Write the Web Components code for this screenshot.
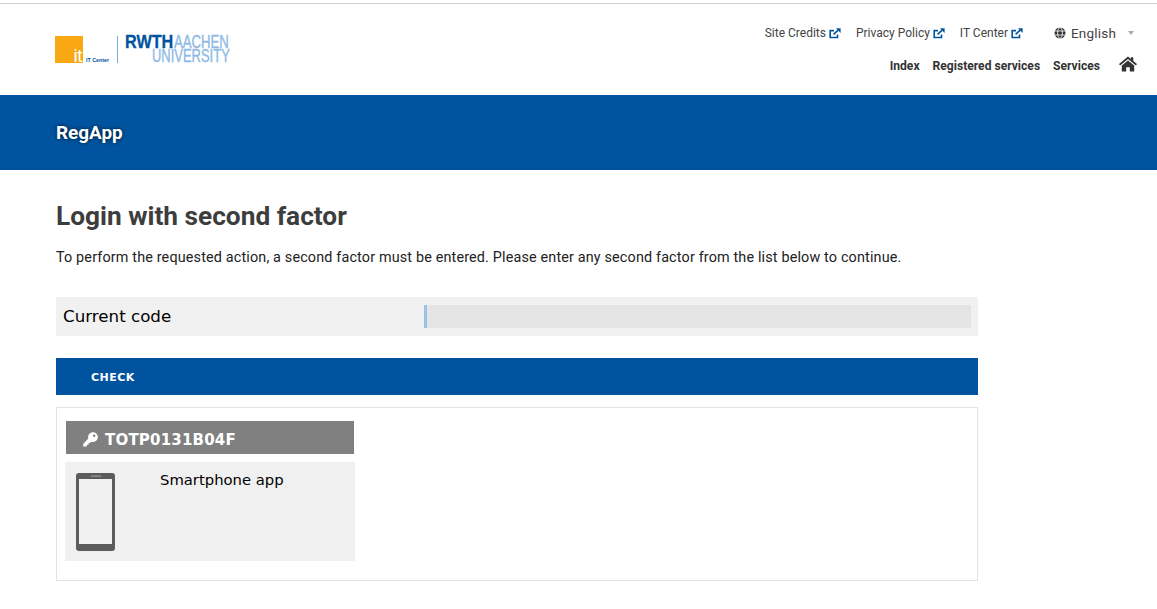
<!DOCTYPE html>
<html lang="en">
<head>
<meta charset="utf-8">
<title>RegApp</title>
<style>
  html, body { margin:0; padding:0; background:#fff; }
  body { font-family:Roboto, sans-serif; color:#333; }
</style>
</head>
<body>
<site-header></site-header>
<title-band>RegApp</title-band>
<main-content>
  <second-factor-form></second-factor-form>
</main-content>

<script>
class SiteLogo extends HTMLElement {
  constructor() {
    super();
    this.attachShadow({ mode: "open" });
    this.shadowRoot.innerHTML = `
      <style>
        :host { display:flex; align-items:flex-start; font-family:"Liberation Sans", sans-serif; }
        .it-box {
          width:28px; height:27px; margin-top:1px; background:#f9a814; color:#fff;
          display:flex; align-items:flex-end; justify-content:flex-end;
          font-size:19px; line-height:15px; padding-right:1px; box-sizing:border-box; letter-spacing:-.5px;
        }
        .it-label {
          width:25px; height:29px; margin-left:3px; display:flex; align-items:flex-end;
          font-size:5.3px; line-height:7px; font-weight:bold; color:#00549f; white-space:nowrap;
        }
        .sep { width:1px; height:27px; background:#7fa7cf; margin:1px 7px 0 6px; }
        .words { display:flex; flex-direction:column; width:105px; font-size:18px; }
        .line { display:flex; height:14px; line-height:14px; white-space:nowrap; }
        .line span { display:block; transform-origin:0 50%; }
        .rwth { width:49px; color:#00549f; font-weight:bold; transform:scaleX(.9); -webkit-text-stroke:.3px #00549f; }
        .aachen { width:55px; color:#8ebae5; transform:scaleX(.73); -webkit-text-stroke:.4px #8ebae5; }
        .univ { margin-left:27px; width:76px; color:#8ebae5; transform:scaleX(.72); -webkit-text-stroke:.4px #8ebae5; }
      </style>
      <div class="it-box">it</div>
      <div class="it-label">IT Center</div>
      <div class="sep"></div>
      <div class="words">
        <div class="line"><span class="rwth">RWTH</span><span class="aachen">AACHEN</span></div>
        <div class="line"><span class="univ">UNIVERSITY</span></div>
      </div>
    `;
  }
}

class UtilLink extends HTMLElement {
  constructor() {
    super();
    this.attachShadow({ mode: "open" });
    this.shadowRoot.innerHTML = `
      <style>
        :host { display:inline-flex; align-items:center; gap:3px; font-size:12px; color:#444; white-space:nowrap; }
        svg { width:12px; height:11px; display:block; }
      </style>
      <slot></slot>
      <svg viewBox="0 0 12 11" fill="none">
        <path d="M8.5 6.5V9.5H1.2V2.6H5" stroke="#00549f" stroke-width="1.6"/>
        <path d="M4.6 6.4L9.4 1.8" stroke="#00549f" stroke-width="1.6"/>
        <path d="M7 0.3H11.6V5Z" fill="#00549f"/>
      </svg>
    `;
  }
}

class SiteHeader extends HTMLElement {
  constructor() {
    super();
    this.attachShadow({ mode: "open" });
    this.shadowRoot.innerHTML = `
      <style>
        :host {
          display:block; height:95px; box-sizing:border-box; margin-top:3px;
          border-top:1px solid #cfcfcf; padding:31px 20px 0 55px;
        }
        .bar { display:flex; justify-content:space-between; align-items:flex-start; }
        .right { display:flex; flex-direction:column; align-items:flex-end; margin-top:-10px; }
        .util { display:flex; align-items:center; height:16px; }
        util-link { margin-right:15px; }
        util-link:nth-of-type(3) { margin-right:31px; }
        .lang { display:flex; align-items:center; font-size:13.5px; color:#444; letter-spacing:.2px; width:80px; margin-right:3px; }
        .lang svg { width:12px; height:12px; margin-right:5px; flex:none; }
        .lang .caret { margin-left:auto; margin-right:0; width:0; height:0; border:3.5px solid transparent; border-top:4px solid #aaa; border-bottom:0; }
        nav { display:flex; align-items:center; margin-top:18px; font-size:12.1px; font-weight:700; color:#333; white-space:nowrap; }
        nav span { margin-right:13px; }
        nav svg { width:18px; height:16px; margin-left:19px; margin-top:-5px; }
      </style>
      <div class="bar">
        <site-logo></site-logo>
        <div class="right">
          <div class="util">
            <util-link>Site Credits</util-link>
            <util-link>Privacy Policy</util-link>
            <util-link>IT Center</util-link>
            <div class="lang">
              <svg viewBox="0 0 12 12" fill="none" stroke="#333">
                <circle cx="6" cy="6" r="5.5" fill="#333" stroke="none"/>
                <ellipse cx="6" cy="6" rx="2.4" ry="5.4" stroke="#fff" stroke-width=".8"/>
                <path d="M.5 4H11.5M.5 8H11.5" stroke="#fff" stroke-width=".8"/>
              </svg>
              <span>English</span>
              <span class="caret"></span>
            </div>
          </div>
          <nav>
            <span>Index</span><span>Registered services</span><span style="margin-right:0">Services</span>
            <svg viewBox="0 0 18 16">
              <path fill="#333" d="M9 0.6L11.9 3V1.2H14.3V5L18 8.1L16.9 9.4L9 2.9L1.1 9.4L0 8.1Z"/>
              <path fill="#333" d="M9 4.4L15.2 9.5V15.6H10.8V11.2H7.2V15.6H2.8V9.5Z"/>
            </svg>
          </nav>
        </div>
      </div>
    `;
  }
}

class TitleBand extends HTMLElement {
  constructor() {
    super();
    this.attachShadow({ mode: "open" });
    this.shadowRoot.innerHTML = `
      <style>
        :host {
          display:flex; align-items:center; height:75px; margin-top:-3px; padding-left:56px;
          background:#00549f; color:#fff; font-size:18.9px; font-weight:700;
          text-shadow:0 0 4px rgba(0,0,0,.75);
        }
      </style>
      <slot></slot>
    `;
  }
}

class MainContent extends HTMLElement {
  constructor() {
    super();
    this.attachShadow({ mode: "open" });
    this.shadowRoot.innerHTML = `
      <style>
        :host { display:block; width:922px; margin-left:56px; padding-top:30px; }
      </style>
      <slot></slot>
    `;
  }
}

class FactorCard extends HTMLElement {
  constructor() {
    super();
    this.attachShadow({ mode: "open" });
    this.shadowRoot.innerHTML = `
      <style>
        :host { display:block; width:290px; font-family:"DejaVu Sans", sans-serif; }
        .head {
          height:33px; margin:0 1px; background:#808080; color:#fff; display:flex; align-items:center;
          padding:4px 0 0 17px; box-sizing:border-box; font-size:15px; font-weight:700; letter-spacing:.2px;
        }
        .head svg { width:15px; height:15px; margin:-1px 7px 0 0; flex:none; }
        .body { margin-top:8px; height:99px; background:#f0f0f0; display:flex; color:#000; }
        .body svg { width:39px; height:78px; margin:11px 0 0 11px; flex:none; }
        .body div { margin-left:45px; padding-top:9px; font-size:14.8px; line-height:17px; }
      </style>
      <div class="head">
        <svg viewBox="0 0 15 15">
          <path fill="#fff" fill-rule="evenodd" d="M10 0.2C12.7 0.2 14.9 2.4 14.9 5.1C14.9 7.8 12.7 10 10 10C9.4 10 8.9 9.9 8.4 9.7L7 11.1H5.6V12.8H3.8V14.6H0.2V11.9L5.3 6.6C5.2 6.1 5.1 5.6 5.1 5.1C5.1 2.4 7.3 0.2 10 0.2ZM11.2 2.6A1.2 1.2 0 1 0 11.2 5A1.2 1.2 0 1 0 11.2 2.6Z"/>
        </svg>
        <slot name="title"></slot>
      </div>
      <div class="body">
        <svg viewBox="0 0 39 78">
          <rect width="39" height="78" rx="3" fill="#5c5c5c"/>
          <rect x="3" y="6" width="33" height="65" fill="#f0f0f0"/>
          <rect x="15" y="2.5" width="10" height="1.2" fill="#a0a0a0"/>
        </svg>
        <div><slot name="name"></slot></div>
      </div>
    `;
  }
}

class SecondFactorForm extends HTMLElement {
  constructor() {
    super();
    this.attachShadow({ mode: "open" });
    this.shadowRoot.innerHTML = `
      <style>
        :host { display:block; }
        h1 { margin:0; font-size:26.25px; line-height:32px; font-weight:700; color:#3d3d3d; }
        p { margin:17px 0 0; font-size:14.4px; line-height:18px; letter-spacing:.15px; color:#222; white-space:nowrap; }
        .code-row {
          margin-top:30px; height:39px; box-sizing:border-box; padding:8px 7px; background:#f1f1f1;
          display:flex; align-items:center; font-family:"DejaVu Sans", sans-serif; font-size:16.7px; color:#000;
        }
        label { width:361px; margin-top:-2px; }
        .input { flex:1; height:23px; background:#e4e4e4; border-left:3px solid #9ac2e6; box-sizing:border-box; }
        button {
          display:block; width:100%; height:37px; margin-top:22px; border:0; padding:2px 0 0 35px;
          background:#00549f; color:#fff; text-align:left;
          font-family:"DejaVu Sans", sans-serif; font-size:11px; font-weight:700; letter-spacing:.5px;
        }
        .cards { margin-top:12px; height:174px; box-sizing:border-box; border:1px solid #e3e3e3; padding:13px 8px 0; }
      </style>
      <h1>Login with second factor</h1>
      <p>To perform the requested action, a second factor must be entered. Please enter any second factor from the list below to continue.</p>
      <div class="code-row">
        <label>Current code</label>
        <div class="input"></div>
      </div>
      <button type="button">CHECK</button>
      <div class="cards">
        <factor-card>
          <span slot="title">TOTP0131B04F</span>
          <span slot="name">Smartphone app</span>
        </factor-card>
      </div>
    `;
  }
}

customElements.define("site-logo", SiteLogo);
customElements.define("util-link", UtilLink);
customElements.define("site-header", SiteHeader);
customElements.define("title-band", TitleBand);
customElements.define("main-content", MainContent);
customElements.define("factor-card", FactorCard);
customElements.define("second-factor-form", SecondFactorForm);
</script>
</body>
</html>
